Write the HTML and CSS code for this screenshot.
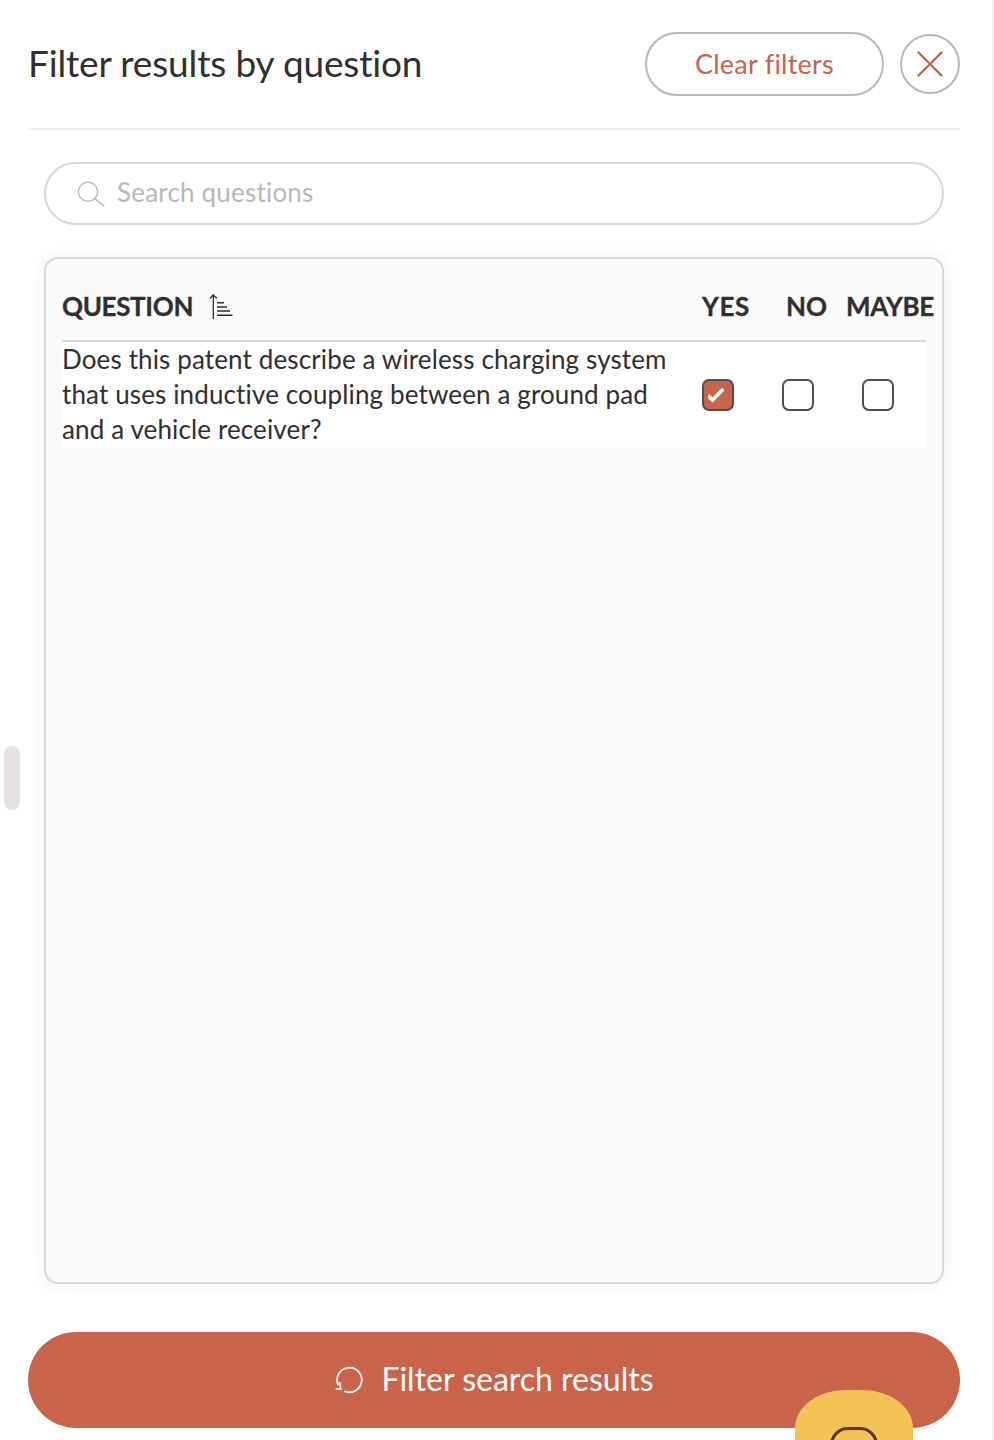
FILE: index.html
```html
<!DOCTYPE html>
<html lang="en">
<head>
  <meta charset="UTF-8">
  <meta name="viewport" content="width=device-width, initial-scale=1.0">
  <title>Filter results by question</title>
  <link rel="stylesheet" href="styles.css">
</head>
<body>

<div class="panel">
  <div class="panel-header">
    <h2>Filter results by question</h2>
    <button class="btn-clear"><span>Clear filters</span></button>
    <button class="btn-close" aria-label="Close">
      <svg width="26" height="26" viewBox="0 0 26 26"><path d="M1.5 1.5l23 23M24.5 1.5l-23 23" fill="none" stroke="#c9634a" stroke-width="2.4" stroke-linecap="round"/></svg>
    </button>
  </div>

  <div class="search">
    <svg width="28" height="28" viewBox="0 0 28 28"><circle cx="11" cy="11.700" r="9.600" fill="none" stroke="#bdb7b5" stroke-width="1.300"/><path d="M17.800 18.500l9.500 7.700" fill="none" stroke="#bdb7b5" stroke-width="1.500"/></svg>
    <input type="text" placeholder="Search questions">
  </div>

  <div class="question-box">
    <div class="question-head">
      <div class="head-title">
        <span class="head-label">QUESTION</span>
        <svg width="24" height="25" viewBox="0 0 24 25"><path d="M4.300 25V.5M.8 4.500L4.300 .8l3.500 3.700" fill="none" stroke="#332e30" stroke-width="1.300"/><path d="M8 8.700h7M8 13h10M8 17h13M8 21.300h15.500" fill="none" stroke="#332e30" stroke-width="1.400"/></svg>
      </div>
      <span class="head-yes">YES</span>
      <span class="head-no">NO</span>
      <span class="head-maybe">MAYBE</span>
    </div>
    <div class="question-row">
      <div class="question-text">Does this patent describe a wireless charging system that uses inductive coupling between a ground pad and a vehicle receiver?</div>
      <span class="check checked">
        <svg width="20" height="16" viewBox="0 0 20 16"><path d="M0 8.700l4.700 4.300L15.300 2" fill="none" stroke="#fff" stroke-width="3.600"/></svg>
      </span>
      <span class="check"></span>
      <span class="check"></span>
    </div>
  </div>

  <button class="btn-filter">
    <svg width="30" height="30" viewBox="0 0 30 30"><path d="M4.300 20.200A12.300 12.300 0 1 1 10 26" fill="none" stroke="#fff" stroke-width="1.800"/><path d="M5.800 17l.9 7H1.500" fill="none" stroke="#fff" stroke-width="1.700"/></svg>
    <span>Filter search results</span>
  </button>
</div>

<div class="drag-handle"></div>

<div class="chat-widget">
  <div class="chat-face"></div>
</div>

</body>
</html>
```

FILE: styles.css
```css
html, body {
  height: 1440px;
  overflow: hidden;
}
body {
  margin: 0;
  background-color: #fff;
  font-family: "Lato", Arial, sans-serif;
  font-variant-ligatures: none;
  color: #332e30;
}
.panel {
  width: 994px;
  height: 1440px;
  box-sizing: border-box;
  border-right: 2px solid #f0eeee;
  padding: 0 32px 0 28px;
}
.panel-header {
  display: flex;
  align-items: center;
  height: 128px;
  border-bottom: 2px solid #f2eeee;
}
h2 {
  flex: 1;
  margin: 0 0 4px;
  font-size: 37px;
  font-weight: 400;
  letter-spacing: -0.15px;
}
button {
  font-family: inherit;
  font-variant-ligatures: none;
  cursor: pointer;
}
.btn-clear {
  width: 239px;
  height: 64px;
  margin-right: 16px;
  padding: 0 0 2px;
  color: #c9634a;
  font-size: 27px;
  letter-spacing: 0.25px;
  background-color: #fff;
  border: 2px solid #bcb6b4;
  border-radius: 32px;
}
.btn-close {
  display: flex;
  align-items: center;
  justify-content: center;
  width: 60px;
  height: 60px;
  padding: 0;
  background-color: #fff;
  border: 2px solid #bcb6b4;
  border-radius: 50%;
}
.search {
  display: flex;
  align-items: center;
  gap: 12px;
  height: 63px;
  box-sizing: border-box;
  margin: 32px 16px 0;
  padding: 0 31px;
  border: 2px solid #dcd7d5;
  border-radius: 32px;
}
.search input {
  flex: 1;
  border: none;
  outline: none;
  padding: 0 0 3px;
  font-family: inherit;
  font-variant-ligatures: none;
  font-size: 26px;
  letter-spacing: 0.2px;
  color: #332e30;
}
.search input::placeholder {
  color: #bdb7b5;
  opacity: 1;
}
.question-box {
  height: 1027px;
  box-sizing: border-box;
  margin: 32px 16px 0;
  padding: 0 16px;
  background-color: #fafafa;
  border: 2px solid #dcd7d5;
  border-radius: 14px;
  box-shadow: 0 0 16px rgba(0, 0, 0, 0.07);
}
.question-head {
  display: grid;
  grid-template-columns: 640px 84px 60px 1fr;
  align-items: center;
  height: 68px;
  padding-top: 13px;
  border-bottom: 2px solid #dcd7d5;
  font-size: 26px;
  font-weight: 700;
  -webkit-text-stroke: 0.3px #332e30;
}
.head-title {
  display: flex;
  align-items: center;
  gap: 16px;
}
.head-label, .head-maybe {
  letter-spacing: -0.35px;
}
.head-yes {
  letter-spacing: 0.6px;
}
.head-maybe {
  white-space: nowrap;
}
.question-row {
  display: grid;
  grid-template-columns: 640px 80px 80px 1fr;
  align-items: center;
  background-color: #fff;
}
.question-text {
  width: 625px;
  font-size: 26px;
  line-height: 35px;
  letter-spacing: 0.13px;
}
.check {
  display: flex;
  align-items: center;
  justify-content: center;
  width: 32px;
  height: 32px;
  box-sizing: border-box;
  border: 2px solid #544d4d;
  border-radius: 7px;
  background-color: #fff;
}
.check.checked {
  background-color: #c9634a;
}
.btn-filter {
  display: flex;
  align-items: center;
  justify-content: center;
  gap: 17px;
  width: 100%;
  height: 96px;
  margin-top: 48px;
  padding: 0 0 4px;
  color: #fff;
  font-size: 32px;
  background-color: #c9634a;
  border: none;
  border-radius: 48px;
}
.btn-filter svg {
  margin-top: 4px;
}
.drag-handle {
  position: absolute;
  left: 4px;
  top: 746px;
  width: 16px;
  height: 64px;
  background-color: #e6e3e2;
  border-radius: 8px;
}
.chat-widget {
  position: absolute;
  left: 795px;
  top: 1390px;
  width: 118px;
  height: 50px;
  overflow: hidden;
  background-color: #f3c355;
  border-radius: 50px 50px 0 0 / 38px 38px 0 0;
}
.chat-face {
  width: 48px;
  height: 40px;
  box-sizing: border-box;
  margin: 37px auto 0;
  border: 3px solid #5c3410;
  border-radius: 18px;
}
```
